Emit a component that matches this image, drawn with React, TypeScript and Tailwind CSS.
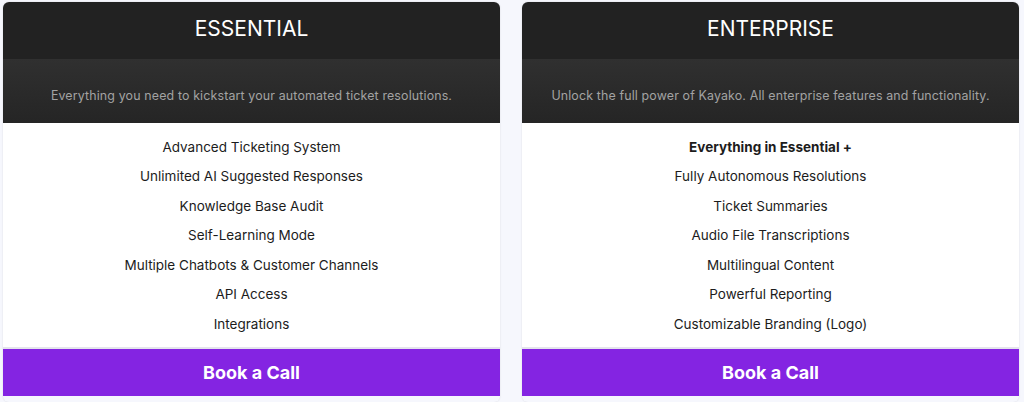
import React from "react";

interface Plan {
  name: string;
  tagline: string;
  features: { text: string; bold?: boolean }[];
}

const plans: Plan[] = [
  {
    name: "ESSENTIAL",
    tagline: "Everything you need to kickstart your automated ticket resolutions.",
    features: [
      { text: "Advanced Ticketing System" },
      { text: "Unlimited AI Suggested Responses" },
      { text: "Knowledge Base Audit" },
      { text: "Self-Learning Mode" },
      { text: "Multiple Chatbots & Customer Channels" },
      { text: "API Access" },
      { text: "Integrations" },
    ],
  },
  {
    name: "ENTERPRISE",
    tagline: "Unlock the full power of Kayako. All enterprise features and functionality.",
    features: [
      { text: "Everything in Essential +", bold: true },
      { text: "Fully Autonomous Resolutions" },
      { text: "Ticket Summaries" },
      { text: "Audio File Transcriptions" },
      { text: "Multilingual Content" },
      { text: "Powerful Reporting" },
      { text: "Customizable Branding (Logo)" },
    ],
  },
];

const PlanCard = ({ plan }: { plan: Plan }) => (
  <div className="w-[497px] flex flex-col rounded-[6px] overflow-hidden shadow-[0_0_2px_rgba(0,0,0,0.12)]">
    <div className="h-[57px] bg-[#222222] flex items-center justify-center pb-[3px]">
      <h3 className="text-[21px] text-white">{plan.name}</h3>
    </div>
    <div className="h-[64px] bg-gradient-to-b from-[#303030] to-[#252525] flex items-end justify-center pb-[17px]">
      <p className="text-[12.4px] text-[#a3a3a3] tracking-[0.15px]">{plan.tagline}</p>
    </div>
    <ul className="bg-white pt-[9px] pb-[8.5px] border-b-2 border-[#e4e4ec]">
      {plan.features.map((f) => (
        <li
          key={f.text}
          className={`h-[29.5px] flex items-center justify-center text-[13.5px] text-[#1c1c1c] ${
            f.bold ? "font-bold" : ""
          }`}
        >
          {f.text}
        </li>
      ))}
    </ul>
    <a
      href="#book"
      className="h-[47px] bg-[#8424e2] flex items-center justify-center text-white text-[18px] font-bold"
    >
      Book a Call
    </a>
  </div>
);

export default function App() {
  return (
    <div
      className="w-[1024px] h-[402px] bg-[#f6f7fd] flex gap-[22px] pl-[3px] pt-[2px]"
      style={{ fontFamily: "Inter, 'Noto Sans', sans-serif" }}
    >
      {plans.map((p) => (
        <PlanCard key={p.name} plan={p} />
      ))}
    </div>
  );
}
